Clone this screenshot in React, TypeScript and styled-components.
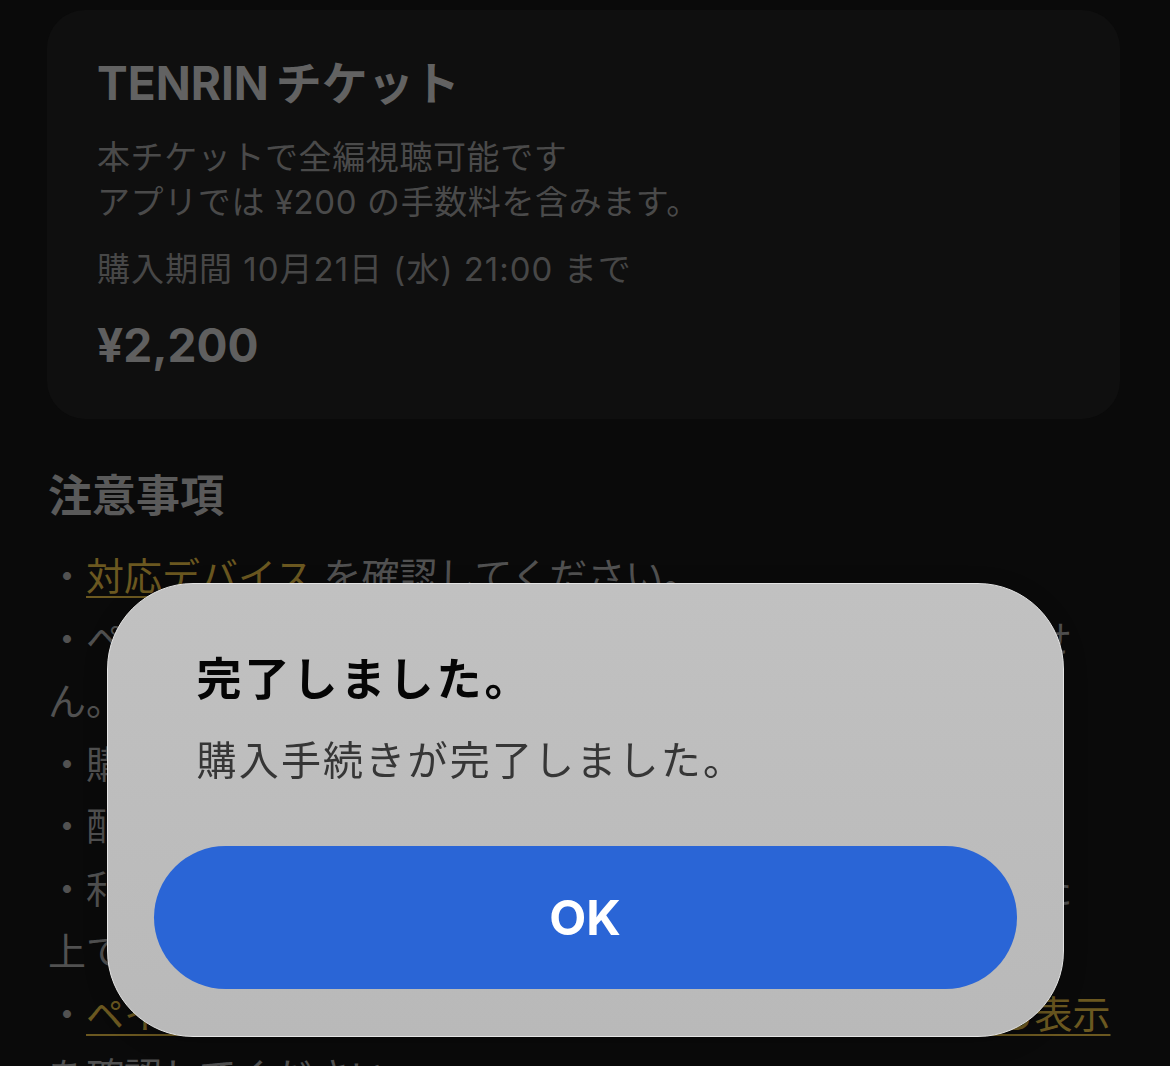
import styled, { createGlobalStyle } from "styled-components";

const GlobalStyle = createGlobalStyle`
    html, body {
        margin: 0;
        padding: 0;
        background: #0a0a0a;
        overflow: hidden;
    }
    body {
        font-family: "Inter", "Noto Sans CJK JP", sans-serif;
    }
    * {
        box-sizing: border-box;
    }
`;

type Note = {
    link?: string;
    text: string;
};

const notes: Note[] = [
    {link: "対応デバイス", text: " を確認してください。"},
    {text: "ペイパービュー購入後のキャンセルおよび返金はできません。"},
    {text: "購入したチケットの譲渡・転売は禁止しております。"},
    {text: "配信内容は予告なく変更になる場合がございます。"},
    {text: "利用規約およびプライバシーポリシーにご同意いただいた\n上でご購入ください。"},
    {link: "ペイパービューの視聴方法はマイページの購入履歴から表示", text: " を確認してください。"},
];

const App = () => {
    return (
        <>
            <GlobalStyle />
            <StyledPage>
                <TicketCard>
                    <TicketTitle>TENRIN チケット</TicketTitle>
                    <TicketDescription>
                        本チケットで全編視聴可能です
                        <br />
                        アプリでは ¥200 の手数料を含みます。
                    </TicketDescription>
                    <TicketPeriod>購入期間 10月21日 (水) 21:00 まで</TicketPeriod>
                    <TicketPrice>¥2,200</TicketPrice>
                </TicketCard>

                <NotesTitle>注意事項</NotesTitle>
                <NotesList>
                    {notes.map((note, i) => (
                        <NoteItem key={i}>
                            ・{note.link && <NoteLink href="#">{note.link}</NoteLink>}
                            {note.text}
                        </NoteItem>
                    ))}
                </NotesList>
            </StyledPage>

            <Backdrop>
                <AlertBox role="alertdialog">
                    <AlertTitle>完了しました。</AlertTitle>
                    <AlertMessage>購入手続きが完了しました。</AlertMessage>
                    <OkButton type="button">OK</OkButton>
                </AlertBox>
            </Backdrop>
        </>
    );
};

export default App;

const StyledPage = styled.div`
    width: 1170px;
    height: 1066px;
    overflow: hidden;
    padding: 10px 48px 0 47px;
    background: #0a0a0a;
`;

const TicketCard = styled.section`
    width: 1073px;
    background: #0f0f0f;
    border-radius: 38px;
    padding: 46px 50px 46px;
`;

const TicketTitle = styled.h1`
    margin: 0;
    font-size: 46px;
    line-height: 55px;
    font-weight: 700;
    color: #626262;
    word-spacing: -4px;
`;

const TicketDescription = styled.p`
    margin: 24px 0 0;
    font-size: 33px;
    line-height: 45px;
    color: #4a4a4a;
    letter-spacing: 0.6px;
`;

const TicketPeriod = styled.p`
    margin: 22px 0 0;
    font-size: 33px;
    line-height: 44px;
    color: #474747;
    letter-spacing: 1px;
`;

const TicketPrice = styled.p`
    margin: 26px 0 0;
    font-size: 46px;
    line-height: 56px;
    font-weight: 700;
    color: #5f5f5f;
`;

const NotesTitle = styled.h2`
    margin: 49px 0 0 1px;
    font-size: 44px;
    line-height: 56px;
    font-weight: 700;
    color: #5a5a5a;
`;

const NotesList = styled.ul`
    list-style: none;
    margin: 21px 0 0 1px;
    padding: 0;
    width: 1074px;
`;

const NoteItem = styled.li`
    font-size: 38px;
    line-height: 62.5px;
    color: #515151;
    white-space: pre-line;
`;

const NoteLink = styled.a`
    color: #6b5820;
    text-decoration: underline;
    text-decoration-thickness: 2px;
    text-underline-offset: 6px;
`;

const Backdrop = styled.div`
    position: fixed;
    inset: 0;
    display: flex;
    justify-content: center;
    align-items: flex-start;
    padding: 583px 0 0 0;
`;

const AlertBox = styled.div`
    width: 957px;
    padding: 67px 46px 47px;
    border-radius: 86px;
    border: 1.5px solid #e4e4e4;
    background: linear-gradient(180deg, #c1c1c1 0%, #bdbdbd 50%, #b9b9b9 100%);
    backdrop-filter: blur(30px);
    box-shadow: 0 6px 24px rgba(0, 0, 0, 0.2);
    display: flex;
    flex-direction: column;
`;

const AlertTitle = styled.h3`
    margin: 0 43px;
    font-size: 45px;
    line-height: 57px;
    font-weight: 700;
    color: #050505;
    letter-spacing: 3px;
`;

const AlertMessage = styled.p`
    margin: 27px 43px 0;
    font-size: 40px;
    line-height: 52px;
    color: #363636;
    letter-spacing: 2.2px;
`;

const OkButton = styled.button`
    margin-top: 59px;
    height: 143px;
    width: 100%;
    border: none;
    border-radius: 72px;
    background: #2a65d6;
    color: #ffffff;
    font-family: "Inter", "Noto Sans CJK JP", sans-serif;
    font-size: 48px;
    font-weight: 700;
    cursor: pointer;
`;
